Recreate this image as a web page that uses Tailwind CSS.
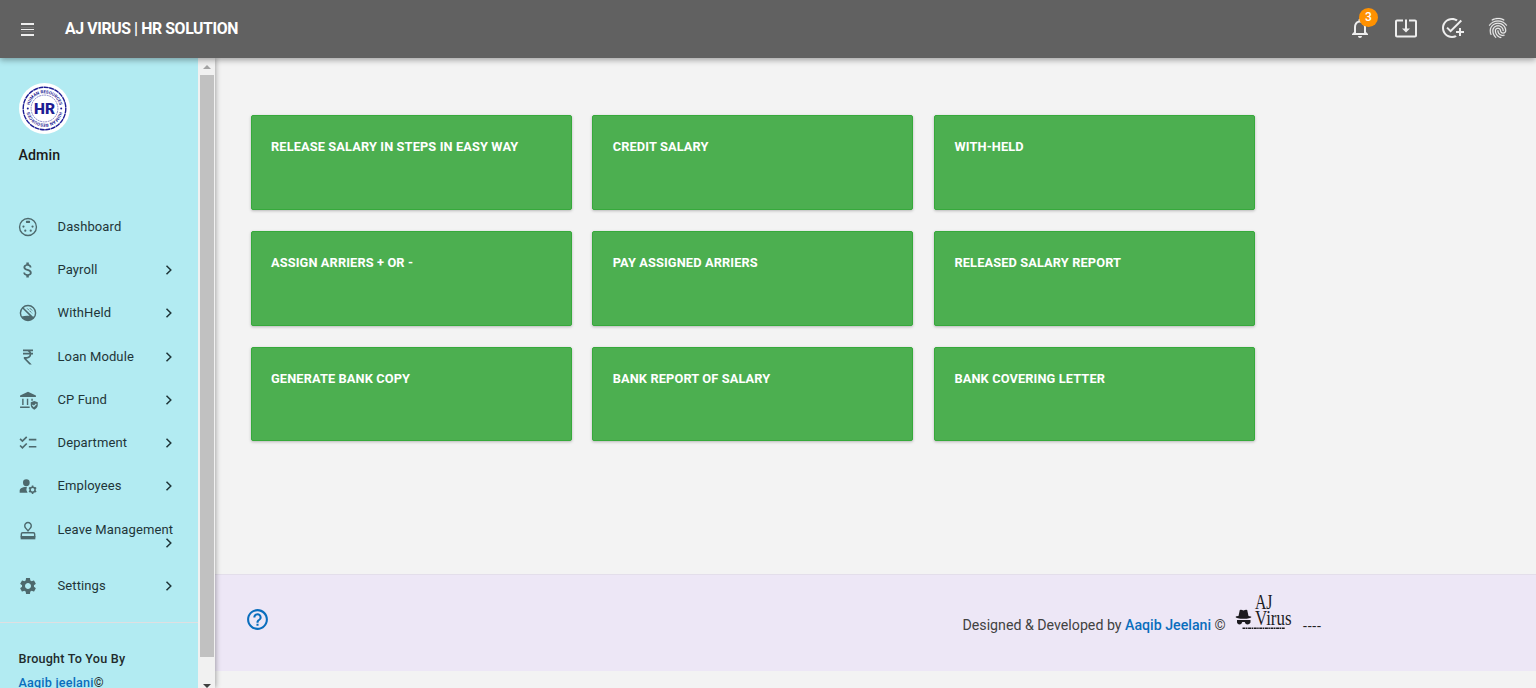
<!DOCTYPE html>
<html lang="en">
<head>
<meta charset="utf-8">
<title>AJ VIRUS | HR SOLUTION</title>
<script src="https://cdn.jsdelivr.net/npm/@tailwindcss/browser@4"></script>
</head>
<body class="h-[688px] overflow-hidden bg-[#f3f3f3] font-[Roboto,sans-serif] flex flex-col">
<svg class="hidden"><symbol id="chev" viewBox="0 0 8 12"><path d="M1.500 1.800 5.800 6 1.500 10.200" fill="none" stroke="currentColor" stroke-width="1.500"/></symbol></svg>

<header class="relative z-10 flex h-[58px] shrink-0 items-center bg-[#616161] text-white shadow-[0_2px_6px_rgba(0,0,0,0.35)]">
  <svg class="ml-[21px] h-[13px] w-[13px] text-[#eee]" viewBox="0 0 13 13" fill="currentColor"><path d="M0 0h13v2H0zM0 6h13v1H0zM0 11h13v2H0z"/><path d="M0 4h13v1H0zM0 8h13v1H0z" opacity=".15"/></svg>
  <h1 class="ml-[31px] whitespace-nowrap text-[15.800px] font-bold tracking-[-0.380px]">AJ VIRUS | HR SOLUTION</h1>
  <div class="mb-[3px] ml-auto mr-[26px] flex items-center gap-[22px] text-[#eee]">
    <div class="relative">
      <svg class="size-6" viewBox="0 0 24 24" fill="currentColor"><path d="M12 22c1.100 0 2-.9 2-2h-4c0 1.100.9 2 2 2zm6-6v-5c0-3.070-1.630-5.640-4.500-6.320V4c0-.83-.67-1.500-1.500-1.500s-1.500.67-1.500 1.500v.68C7.640 5.360 6 7.920 6 11v5l-2 2v1h16v-1l-2-2zm-2 1H8v-6c0-2.480 1.510-4.500 4-4.500s4 2.020 4 4.500v6z"/></svg>
      <span class="absolute -top-[8px] left-[11px] flex size-[19px] items-center justify-center rounded-full bg-[#ff9100] text-[12px] font-medium text-white">3</span>
    </div>
    <svg class="size-6" viewBox="0 0 24 24" fill="currentColor"><path d="M12 16.500l4-4h-3v-9h-2v9H8l4 4zm9-13h-6v1.990h6v14.030H3V5.490h6V3.500H3c-1.100 0-2 .9-2 2v14c0 1.100.9 2 2 2h18c1.100 0 2-.9 2-2v-14c0-1.100-.9-2-2-2z"/></svg>
    <svg class="size-6" viewBox="0 0 24 24" fill="currentColor"><path d="M22 5.180 10.590 16.600l-4.240-4.240 1.410-1.410 2.830 2.830 10-10L22 5.180zM12 20c-4.410 0-8-3.590-8-8s3.590-8 8-8c1.570 0 3.040.46 4.280 1.250l1.450-1.450C16.100 2.670 14.130 2 12 2 6.480 2 2 6.480 2 12s4.480 10 10 10c1.730 0 3.360-.44 4.780-1.220l-1.500-1.500c-1 .46-2.110.72-3.280.72zm7-5h-3v2h3v3h2v-3h3v-2h-3v-3h-2v3z"/></svg>
    <svg class="size-6" viewBox="0 0 24 24" fill="currentColor" stroke="currentColor" stroke-width=".25"><path d="M17.810 4.470c-.08 0-.16-.02-.23-.06C15.660 3.420 14 3 12.010 3c-1.980 0-3.860.47-5.570 1.410-.24.13-.54.04-.68-.2-.13-.24-.04-.55.2-.68C7.820 2.520 9.860 2 12.010 2c2.130 0 3.990.47 6.030 1.520.25.13.34.43.21.67-.09.18-.26.28-.44.28zM3.500 9.720c-.1 0-.2-.03-.29-.09-.23-.16-.28-.47-.12-.7.99-1.400 2.250-2.500 3.750-3.270C9.980 4.040 14 4.030 17.150 5.650c1.500.77 2.760 1.860 3.750 3.250.16.22.11.54-.12.7-.23.16-.54.11-.7-.12-.9-1.260-2.040-2.250-3.390-2.940-2.870-1.470-6.540-1.470-9.400.01-1.360.7-2.500 1.700-3.400 2.960-.08.14-.23.21-.39.21zm6.250 12.070c-.13 0-.26-.05-.35-.15-.87-.87-1.340-1.430-2.010-2.640-.69-1.230-1.050-2.730-1.050-4.340 0-2.970 2.540-5.390 5.660-5.390s5.660 2.420 5.660 5.390c0 .28-.22.5-.5.5s-.5-.22-.5-.5c0-2.420-2.090-4.390-4.660-4.390-2.570 0-4.660 1.970-4.660 4.390 0 1.440.32 2.770.93 3.850.64 1.150 1.080 1.640 1.850 2.420.19.2.19.51 0 .71-.11.1-.24.15-.37.15zm7.170-1.850c-1.190 0-2.240-.3-3.100-.89-1.490-1.010-2.380-2.650-2.380-4.390 0-.28.22-.5.5-.5s.5.22.5.5c0 1.410.72 2.740 1.940 3.560.71.48 1.540.71 2.540.71.24 0 .64-.03 1.040-.1.27-.05.53.13.58.41.05.27-.13.53-.41.58-.57.11-1.070.12-1.210.12zM14.910 22c-.04 0-.09-.01-.13-.02-1.590-.44-2.630-1.030-3.720-2.100-1.400-1.390-2.170-3.240-2.170-5.220 0-1.620 1.380-2.940 3.080-2.940 1.700 0 3.080 1.320 3.080 2.940 0 1.070.93 1.940 2.080 1.940s2.080-.87 2.080-1.940c0-3.770-3.250-6.830-7.250-6.830-2.840 0-5.440 1.580-6.610 4.030-.39.81-.59 1.760-.59 2.800 0 .78.07 2.010.67 3.610.1.26-.03.55-.29.64-.26.1-.55-.04-.64-.29-.49-1.310-.73-2.610-.73-3.960 0-1.200.23-2.290.68-3.240 1.330-2.790 4.280-4.600 7.510-4.600 4.550 0 8.250 3.510 8.250 7.830 0 1.620-1.380 2.940-3.080 2.940s-3.080-1.320-3.080-2.940c0-1.070-.93-1.940-2.080-1.940s-2.080.87-2.080 1.940c0 1.710.66 3.310 1.870 4.510.95.94 1.860 1.460 3.270 1.850.27.07.42.35.35.61-.05.23-.26.38-.47.38z"/></svg>
  </div>
</header>

<div class="flex h-[630px] shrink-0">
  <aside class="relative z-[5] flex w-[215px] shrink-0 shadow-[1px_0_5px_rgba(0,0,0,0.32)]">
    <div class="w-[198px] overflow-hidden bg-[#b2ebf2]">
      <div class="h-[147.500px] pl-[18.500px] pt-[25px]">
        <svg class="block size-[51px]" viewBox="0 0 51 51">
          <circle cx="25.500" cy="25.500" r="25.500" fill="#fff"/>
          <g fill="none" stroke="#1d1d94"><circle cx="25.500" cy="25.500" r="21.300" stroke-width="1.400" stroke-dasharray="5 .5"/><circle cx="25.500" cy="25.500" r="13.400" stroke-width=".5" stroke-dasharray="2 .6"/></g>
          <path id="arcTop" d="M10.200 25.500a15.300 15.300 0 0 1 30.600 0" fill="none"/>
          <path id="arcBot" d="M40.800 25.500a15.300 15.300 0 0 1-30.600 0" fill="none"/>
          <g fill="#1d1d94" font-family="Roboto, sans-serif" font-weight="700" text-anchor="middle">
            <text font-size="4.300"><textPath href="#arcTop" startOffset="50%">HUMAN RESOURCES</textPath></text>
            <text font-size="4.300"><textPath href="#arcBot" startOffset="50%">HUMAN RESOURCES</textPath></text>
            <text x="25.500" y="30.800" font-size="15.500" font-weight="900" textLength="21" lengthAdjust="spacingAndGlyphs">HR</text>
          </g>
          <circle cx="8.800" cy="25.500" r="1" fill="#1d1d94"/><circle cx="42.200" cy="25.500" r="1" fill="#1d1d94"/>
        </svg>
        <p class="mt-[11px] text-[14.200px] font-medium leading-5 tracking-[0.1px] text-[#1b1b1b]">Admin</p>
      </div>
      <nav class="text-[13px] leading-[18px] tracking-[0.110px] text-[#1f3538] [&>a]:flex [&>a]:h-[43.200px] [&>a]:items-center [&>a]:pl-[18px] [&>a]:pr-[25px] [&>a>span]:flex-1 [&>a>span]:whitespace-nowrap [&>a>svg:first-child]:mr-[19.500px] [&>a>svg:first-child]:size-5 [&>a>svg:first-child]:shrink-0 [&>a>svg:first-child]:text-[#4d696d]">
        <a><svg viewBox="1 1 22 22" fill="currentColor"><circle cx="12" cy="12" r="9.300" fill="none" stroke="currentColor" stroke-width="1.500"/><rect x="9.700" y="5.200" width="4.600" height="2.300" rx=".7"/><circle cx="7" cy="11.500" r="1.200"/><circle cx="17" cy="11.500" r="1.200"/><circle cx="9" cy="16" r="1.200"/><circle cx="15" cy="16" r="1.200"/></svg><span>Dashboard</span></a>
        <a><svg viewBox="0 0 24 24" fill="currentColor"><path d="M11.800 10.900c-2.270-.59-3-1.200-3-2.150 0-1.090 1.010-1.850 2.700-1.850 1.780 0 2.440.85 2.500 2.100h2.210c-.07-1.720-1.120-3.300-3.210-3.810V3h-3v2.160c-1.940.42-3.500 1.680-3.500 3.610 0 2.310 1.910 3.460 4.700 4.130 2.500.6 3 1.480 3 2.410 0 .69-.49 1.790-2.700 1.790-2.060 0-2.870-.92-2.980-2.100h-2.200c.12 2.190 1.760 3.420 3.680 3.830V21h3v-2.150c1.950-.37 3.500-1.500 3.500-3.550 0-2.840-2.430-3.810-4.700-4.400z"/></svg><span>Payroll</span><svg class="h-3 w-2"><use href="#chev"/></svg></a>
        <a><svg viewBox="0 0 24 24" fill="currentColor"><circle cx="12" cy="12" r="9.100" fill="none" stroke="currentColor" stroke-width="1.700"/><path d="M4.200 16.200c3-.9 6-1.200 9-.9l6.600 1.200C18 19.500 15.300 21 12 21s-6-1.500-7.800-4.800zM5 6.200 6.200 5 19 17.500 17.500 19z"/><path d="m11 6.500 6 6M14.200 6.200l3.500 3.500" fill="none" stroke="currentColor" stroke-width="1.100" stroke-dasharray="3 1"/></svg><span>WithHeld</span><svg class="h-3 w-2"><use href="#chev"/></svg></a>
        <a><svg viewBox="0 0 24 24" fill="currentColor"><path d="M13.660 7C13.100 5.820 11.900 5 10.500 5H6V3h12v2h-3.260c.48.58.84 1.260 1.050 2H18v2h-2.020c-.25 2.800-2.610 5-5.480 5h-.73l6.730 7h-2.770L7 14v-2h3.500c1.760 0 3.220-1.300 3.460-3H6V7h7.660z"/></svg><span>Loan Module</span><svg class="h-3 w-2"><use href="#chev"/></svg></a>
        <a><svg class="overflow-visible" viewBox="0 0 24 24" fill="currentColor"><path d="M12 2 2.500 6.500v2h19v-2zM5 10.500h1.700V18H5zM10.600 10.500h1.700V18h-1.700zM16 10.500h1.700V13H16zM2.500 19.700H14v1.800H2.500z"/><path d="m19.500 13.200-4.200 1.600v3.300c0 2.500 1.700 4.600 4.200 5.500 2.500-.9 4.200-3 4.200-5.500v-3.300z"/><path d="m17.300 18 1.700 1.700 3-3" fill="none" stroke="#b2ebf2" stroke-width="1.300"/></svg><span>CP Fund</span><svg class="h-3 w-2"><use href="#chev"/></svg></a>
        <a><svg viewBox="0 0 24 24" fill="none" stroke="currentColor" stroke-width="2"><path d="m2.500 7 2.800 2.800L10.500 4.600M2.500 15l2.800 2.800L10.500 12.600M13 8h9M13 16.500h9"/></svg><span>Department</span><svg class="h-3 w-2"><use href="#chev"/></svg></a>
        <a><svg viewBox="0 0 24 24" fill="currentColor"><circle cx="10" cy="8" r="4"/><path d="M10.670 13.020C7.800 12.800 5.400 13.900 3.600 14.700A3 3 0 0 0 2 17.350V20h9.500a7 7 0 0 1-.83-6.980z"/><circle cx="17.500" cy="16.500" r="3" fill="none" stroke="currentColor" stroke-width="1.800"/><path d="M17.500 11.500v2M17.500 19.500v2M13.200 14l1.700 1M20.100 18l1.700 1M13.200 19l1.700-1M20.100 15l1.700-1" stroke="currentColor" stroke-width="1.900"/></svg><span>Employees</span><svg class="h-3 w-2"><use href="#chev"/></svg></a>
        <a class="relative !h-[57px] !items-start pt-[13px]"><svg viewBox="0 0 24 24" fill="none" stroke="currentColor" stroke-width="1.700"><path d="M12 11.800 9.300 8.600a3.900 3.900 0 1 1 5.400 0zM4 19v-3.500q0-1.500 1.500-1.500h13q1.500 0 1.500 1.500V19z"/><path d="M3.200 18h17.600v4H3.200z" fill="currentColor" stroke="none"/></svg><span>Leave Management</span><svg class="absolute right-[25px] top-[29px] h-3 w-2"><use href="#chev"/></svg></a>
        <a><svg viewBox="0 0 24 24" fill="currentColor"><path d="M19.140 12.940c.04-.3.06-.61.06-.94 0-.32-.02-.64-.07-.94l2.030-1.580c.18-.14.23-.41.12-.61l-1.920-3.320c-.12-.22-.37-.29-.59-.22l-2.390.96c-.5-.38-1.030-.7-1.620-.94l-.36-2.540c-.04-.24-.24-.41-.48-.41h-3.840c-.24 0-.43.17-.47.41l-.36 2.540c-.59.24-1.130.57-1.620.94l-2.390-.96c-.22-.08-.47 0-.59.22L2.740 8.870c-.12.21-.08.47.12.61l2.030 1.580c-.05.3-.09.63-.09.94s.02.64.07.94l-2.030 1.580c-.18.14-.23.41-.12.61l1.920 3.320c.12.22.37.29.59.22l2.390-.96c.5.38 1.030.7 1.620.94l.36 2.540c.05.24.24.41.48.41h3.840c.24 0 .44-.17.47-.41l.36-2.540c.59-.24 1.130-.56 1.620-.94l2.390.96c.22.08.47 0 .59-.22l1.920-3.320c.12-.22.07-.47-.12-.61l-2.010-1.580zM12 15.600c-1.980 0-3.600-1.620-3.600-3.600s1.620-3.600 3.600-3.600 3.600 1.620 3.600 3.600-1.620 3.600-3.600 3.600z"/></svg><span>Settings</span><svg class="h-3 w-2"><use href="#chev"/></svg></a>
      </nav>
      <div class="mt-[14px] h-px bg-[#e0dfe1]"></div>
      <div class="pl-[18.500px] pt-[24px] text-[12.600px] font-medium leading-6 tracking-[0.2px] text-[#1f2b2d]">
        <p>Brought To You By</p>
        <p><a class="text-[#0a6ebd]">Aaqib jeelani</a>©</p>
      </div>
    </div>
    <div class="flex w-[17px] flex-col items-center bg-[#f1f1f1]">
      <div class="flex h-[17px] items-center pt-[1px]"><svg class="h-1 w-2" viewBox="0 0 8 4"><path d="M0 4 4 0l4 4z" fill="#a3a3a3"/></svg></div>
      <div class="h-[583px] w-[14px] bg-[#c1c1c1]"></div>
      <svg class="mt-[27px] h-1 w-2 shrink-0" viewBox="0 0 8 4"><path d="M0 0h8L4 4z" fill="#404040"/></svg>
    </div>
  </aside>

  <div class="flex flex-1 flex-col">
    <main class="h-[516px] pl-[35.500px] pt-[57px]">
      <div class="grid w-[1004.500px] grid-cols-3 gap-x-[20.700px] gap-y-[21px] text-[12.800px] font-bold leading-5 tracking-[0.120px] text-white [&>div]:h-[94.800px] [&>div]:rounded-[2px] [&>div]:border [&>div]:border-[#36a93b] [&>div]:bg-[#4caf50] [&>div]:pl-[19.500px] [&>div]:pt-[21px] [&>div]:shadow-[0_1px_3px_rgba(0,0,0,0.25)]">
        <div>RELEASE SALARY IN STEPS IN EASY WAY</div>
        <div>CREDIT SALARY</div>
        <div>WITH-HELD</div>
        <div>ASSIGN ARRIERS + OR -</div>
        <div>PAY ASSIGNED ARRIERS</div>
        <div>RELEASED SALARY REPORT</div>
        <div>GENERATE BANK COPY</div>
        <div>BANK REPORT OF SALARY</div>
        <div>BANK COVERING LETTER</div>
      </div>
    </main>
    <footer class="flex h-[97px] items-start border-t border-[#e3deea] bg-[#ede7f6] pl-[30px] text-[14.200px] text-[#424242]">
      <svg class="mt-[32px] size-[25px] text-[#0a6ebd]" viewBox="0 0 24 24" fill="currentColor"><path d="M11 18h2v-2h-2v2zm1-16C6.480 2 2 6.480 2 12s4.480 10 10 10 10-4.480 10-10S17.520 2 12 2zm0 18c-4.410 0-8-3.590-8-8s3.590-8 8-8 8 3.590 8 8-3.590 8-8 8zm0-14c-2.210 0-4 1.790-4 4h2c0-1.100.9-2 2-2s2 .9 2 2c0 2-3 1.750-3 5h2c0-2.250 3-2.500 3-5 0-2.210-1.790-4-4-4z"/></svg>
      <p class="ml-[692.500px] mt-[40px] w-[263px] whitespace-nowrap leading-5">Designed &amp; Developed by <a class="font-medium text-[#0a6ebd]">Aaqib Jeelani</a> ©</p>
      <svg class="ml-[9.500px] mt-[17px] h-[40px] w-[58px] overflow-visible" viewBox="0 0 58 40" fill="#1c1b1f">
        <path d="M3.500 24 4.800 18q1.500-.7 3.700.6 2.300-1.300 3.700-.6L13.500 24q3 .3 3 1-1 1.800-8 1.800T.5 25q.3-.8 3-1zM2 28h13.500v2.500q-1 2-3 2t-2.800-2.600H7.300Q6.500 32.500 4.500 32.500t-2.500-2z"/>
        <g font-family="Liberation Serif, serif"><text x="20" y="16.500" font-size="21" textLength="17.500" lengthAdjust="spacingAndGlyphs">AJ</text><text x="20" y="32.500" font-size="22" textLength="36.500" lengthAdjust="spacingAndGlyphs">Virus</text></g>
        <path d="M7.500 36.200h42.500" stroke="#1c1b1f" stroke-width="1.500" stroke-dasharray="3 .5 1.500 .6"/>
      </svg>
      <span class="ml-[10px] mt-[41px] leading-5 tracking-[0.750px] text-[#222]">----</span>
    </footer>
  </div>
</div>
</body>
</html>
